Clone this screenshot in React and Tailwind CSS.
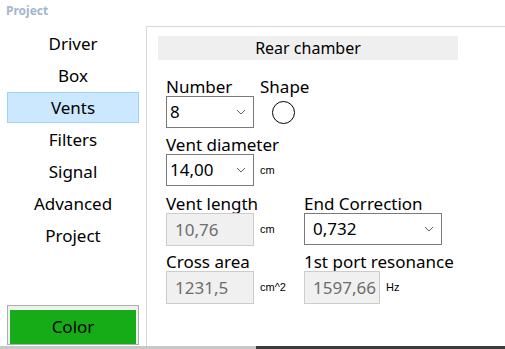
import React from "react";

const font = { fontFamily: '"Noto Sans", "Open Sans", sans-serif' };

const navItems = ["Driver", "Box", "Vents", "Filters", "Signal", "Advanced", "Project"];

const Chevron = () => (
  <svg width="10" height="6" viewBox="0 0 10 6" className="text-[#606060]">
    <path d="M1 1 L5 5 L9 1" fill="none" stroke="currentColor" strokeWidth="1" />
  </svg>
);

const Select = ({ value, className }) => (
  <div
    className={`flex h-[32px] items-center justify-between border border-[#7a7a7a] bg-white pl-[3px] pr-[7px] text-[17px] text-black ${className}`}
  >
    <span>{value}</span>
    <Chevron />
  </div>
);

const ReadOnly = ({ value, className }) => (
  <div
    className={`flex h-[33px] items-center border border-[#cccccc] bg-[#f0f0f0] pl-[8px] text-[17px] text-[#6d6d6d] ${className}`}
  >
    {value}
  </div>
);

const Unit = ({ children }) => (
  <span className="ml-[6px] text-[11px] text-black" style={{ fontFamily: '"Liberation Sans", sans-serif' }}>
    {children}
  </span>
);

const Label = ({ children }) => <div className="h-[18px] text-[17px] leading-[18px] text-black">{children}</div>;

export default function App() {
  return (
    <div className="flex h-[349px] w-[505px] flex-col overflow-hidden bg-white" style={font}>
      <div className="h-[26px] pl-[6px] pt-[2px] text-[12px] font-bold text-[#a3b6cc]">Project</div>
      <div className="flex flex-1">
        <div className="flex w-[146px] flex-col pb-[1px]">
          <div className="flex flex-col gap-[1px] pt-[2px]">
            {navItems.map((item) => (
              <div
                key={item}
                className={`mx-[7px] flex h-[31px] items-center justify-center border text-[17px] text-black ${
                  item === "Vents" ? "border-[#99d1ff] bg-[#cce8ff]" : "border-transparent"
                }`}
              >
                {item}
              </div>
            ))}
          </div>
          <div className="mt-auto mx-[7px] flex h-[40px] border border-[#adadad] bg-[#f0f0f0] px-[2px] pt-[4px]">
            <div className="flex flex-1 items-center justify-center bg-[#15ac17] text-[17px] text-black">Color</div>
          </div>
        </div>
        <div className="flex-1 border-l border-t border-[#d9d9d9] pl-[11px] pt-[9px]">
          <div className="flex h-[24px] w-[300px] items-center justify-center bg-[#efefef] text-[16px] text-black">
            Rear chamber
          </div>
          <div className="pl-[8px] pt-[18px]">
            <div className="flex gap-[6px]">
              <div>
                <Label>Number</Label>
                <Select value="8" className="w-[88px]" />
              </div>
              <div>
                <Label>Shape</Label>
                <div className="ml-[12px] mt-[5px] h-[23px] w-[23px] rounded-full border border-black" />
              </div>
            </div>
            <div className="mt-[8px]">
              <Label>Vent diameter</Label>
              <div className="flex items-center">
                <Select value="14,00" className="w-[88px]" />
                <Unit>cm</Unit>
              </div>
            </div>
            <div className="mt-[9px] flex">
              <div className="w-[138px]">
                <Label>Vent length</Label>
                <div className="flex items-center">
                  <ReadOnly value="10,76" className="w-[88px]" />
                  <Unit>cm</Unit>
                </div>
              </div>
              <div>
                <Label>End Correction</Label>
                <Select value="0,732" className="w-[138px] pl-[8px]" />
              </div>
            </div>
            <div className="mt-[7px] flex">
              <div className="w-[138px]">
                <Label>Cross area</Label>
                <div className="flex items-center">
                  <ReadOnly value="1231,5" className="w-[88px]" />
                  <Unit>cm^2</Unit>
                </div>
              </div>
              <div>
                <Label>1st port resonance</Label>
                <div className="flex items-center">
                  <ReadOnly value="1597,66" className="w-[76px]" />
                  <Unit>Hz</Unit>
                </div>
              </div>
            </div>
          </div>
        </div>
      </div>
      <div className="flex h-[3px]">
        <div className="w-[256px] bg-[#c8c8c8]" />
        <div className="flex-1 bg-[#3c3c3c]" />
      </div>
    </div>
  );
}
